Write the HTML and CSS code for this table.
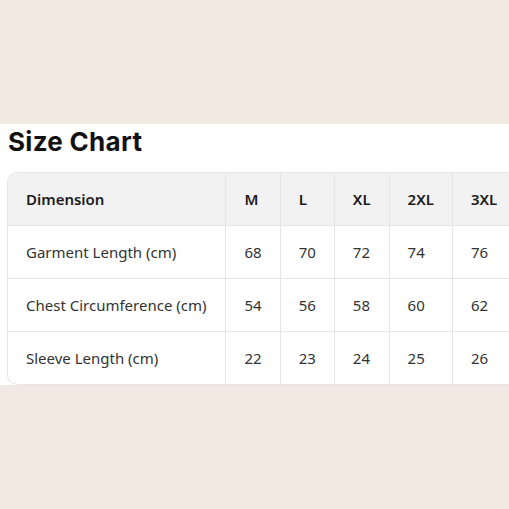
FILE: index.html
```html
<!DOCTYPE html>
<html>
<head>
<meta charset="utf-8">
<link rel="stylesheet" href="styles.css">
</head>
<body>
<section class="band">
  <h2 class="title">Size Chart</h2>
  <div class="table-wrap">
    <table class="chart">
      <thead>
        <tr><th class="dim">Dimension</th><th>M</th><th>L</th><th>XL</th><th>2XL</th><th>3XL</th></tr>
      </thead>
      <tbody>
        <tr><td class="dim">Garment Length (cm)</td><td>68</td><td>70</td><td>72</td><td>74</td><td>76</td></tr>
        <tr><td class="dim">Chest Circumference (cm)</td><td>54</td><td>56</td><td>58</td><td>60</td><td>62</td></tr>
        <tr><td class="dim">Sleeve Length (cm)</td><td>22</td><td>23</td><td>24</td><td>25</td><td>26</td></tr>
      </tbody>
    </table>
  </div>
</section>
</body>
</html>
```
FILE: styles.css
```css
html, body { margin: 0; padding: 0; }
body {
  background: #f2e9e3;
  height: 509px;
  display: flex;
  flex-direction: column;
  justify-content: center;
  overflow: hidden;
}
.band {
  background: #ffffff;
  padding: 0 0 0 7px;
  overflow: hidden;
}
.title {
  margin: 0 0 12px 0;
  font-family: Inter, "Noto Sans", sans-serif;
  font-weight: 700;
  font-size: 26px;
  letter-spacing: 0.3px;
  line-height: 36px;
  color: #111111;
  padding-left: 1px;
}
.table-wrap {
  width: 600px;
}
.chart {
  border-collapse: separate;
  border-spacing: 0;
  border: 1px solid #e6e6e6;
  border-bottom: none;
  border-radius: 10px;
  font-family: "Noto Sans", sans-serif;
  font-size: 15px;
  color: #333333;
}
.chart th, .chart td {
  height: 53px;
  padding: 0 18px;
  text-align: left;
  border-right: 1px solid #e6e6e6;
  border-bottom: 1px solid #e6e6e6;
  box-sizing: border-box;
  white-space: nowrap;
}
.chart .dim { padding-right: 19px; }
.chart th {
  background: #f2f2f2;
  font-weight: 600;
  color: #1c1c1c;
}
.chart thead th:first-child { border-top-left-radius: 10px; }
.chart tbody tr:last-child td:first-child { border-bottom-left-radius: 10px; }
```
